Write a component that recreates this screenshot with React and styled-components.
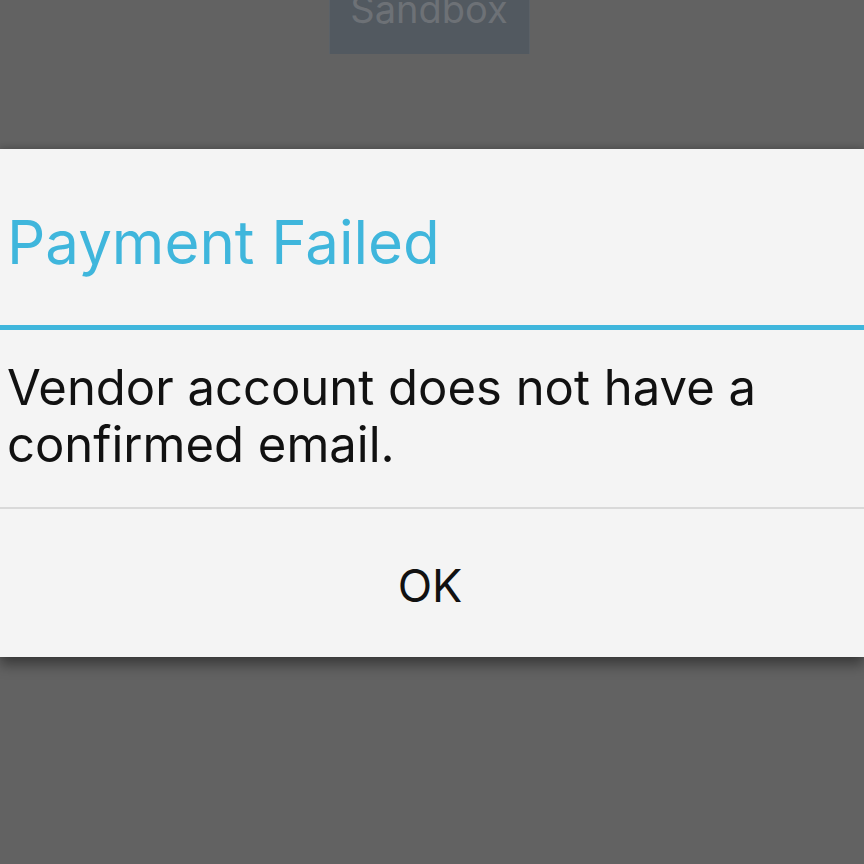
import React from "react";
import styled, { createGlobalStyle } from "styled-components";

const GlobalStyle = createGlobalStyle`
  html, body {
    margin: 0;
    padding: 0;
    background: #626262;
    font-family: Inter, "Noto Sans", sans-serif;
  }
`;

const Page = styled.div`
  width: 864px;
  height: 864px;
  background: #626262;
  overflow: hidden;
`;

const TopBar = styled.div`
  height: 54px;
  display: flex;
  justify-content: center;
  overflow: hidden;
  padding-right: 6px;
`;

const SandboxButton = styled.div`
  width: 199px;
  height: 66px;
  margin-top: -12px;
  background: #525960;
  border: 1px solid #5b6167;
  color: #6d7176;
  font-size: 38px;
  line-height: 40px;
  text-align: center;
`;

const Dialog = styled.div`
  margin-top: 95px;
  background: #f4f4f4;
  box-shadow: 0 8px 12px rgba(0, 0, 0, 0.4), 0 -2px 6px rgba(0, 0, 0, 0.15);
`;

const Header = styled.div`
  height: 181px;
  display: flex;
  align-items: center;
  padding: 10px 7px 0;
  box-sizing: border-box;
  border-bottom: 5px solid #3fb6dc;
`;

const Title = styled.h1`
  margin: 0;
  font-size: 60px;
  font-weight: 400;
  color: #3fb6dc;
`;

const Body = styled.div`
  height: 179px;
  box-sizing: border-box;
  padding: 29px 7px 0;
  border-bottom: 2px solid #d9d9d9;
`;

const Message = styled.p`
  margin: 0;
  font-size: 49px;
  line-height: 57px;
  color: #111;
`;

const Actions = styled.div`
  height: 148px;
  display: flex;
  align-items: center;
  justify-content: center;
`;

const ActionButton = styled.button`
  border: none;
  background: transparent;
  font-family: Inter, "Noto Sans", sans-serif;
  font-size: 45px;
  color: #111;
  padding: 0;
  margin-top: 4px;
  margin-right: 4px;
`;

export default function App() {
  return (
    <Page>
      <GlobalStyle />
      <TopBar>
        <SandboxButton>Sandbox</SandboxButton>
      </TopBar>
      <Dialog>
        <Header>
          <Title>Payment Failed</Title>
        </Header>
        <Body>
          <Message>
            Vendor account does not have a<br />
            confirmed email.
          </Message>
        </Body>
        <Actions>
          <ActionButton>OK</ActionButton>
        </Actions>
      </Dialog>
    </Page>
  );
}
